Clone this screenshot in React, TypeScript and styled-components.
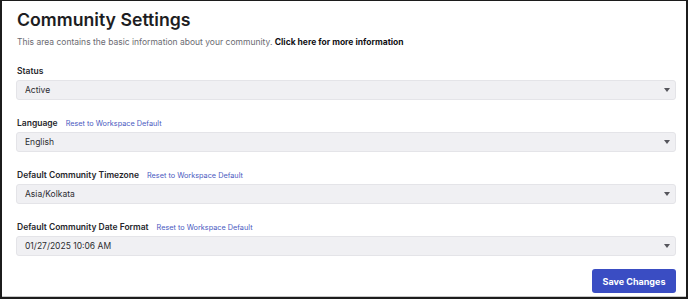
import React from "react";
import styled, { createGlobalStyle } from "styled-components";

const GlobalStyle = createGlobalStyle`
  html, body {
    margin: 0;
    padding: 0;
    background: #ffffff;
  }
  body {
    font-family: Inter, "Noto Sans", "Liberation Sans", sans-serif;
    color: #1f1f24;
  }
`;

const fields = [
  { label: "Status", value: "Active", reset: false },
  { label: "Language", value: "English", reset: true },
  { label: "Default Community Timezone", value: "Asia/Kolkata", reset: true },
  { label: "Default Community Date Format", value: "01/27/2025 10:06 AM", reset: true },
];

const Caret = () => (
  <svg width="6" height="4" viewBox="0 0 6 4">
    <path d="M0 0 L6 0 L3 4 Z" fill="#55555c" />
  </svg>
);

export default function App() {
  return (
    <>
      <GlobalStyle />
      <Frame>
        <Title>Community Settings</Title>
        <Intro>
          This area contains the basic information about your community.{" "}
          <strong>Click here for more information</strong>
        </Intro>
        <Form>
          {fields.map((f) => (
            <Field key={f.label}>
              <LabelRow>
                <Label>{f.label}</Label>
                {f.reset && <ResetLink>Reset to Workspace Default</ResetLink>}
              </LabelRow>
              <Select>
                <span>{f.value}</span>
                <Caret />
              </Select>
            </Field>
          ))}
        </Form>
        <Footer>
          <SaveButton>Save Changes</SaveButton>
        </Footer>
      </Frame>
    </>
  );
}

const Frame = styled.div`
  box-sizing: border-box;
  width: 688px;
  height: 299px;
  border: 2px solid #1c1c1c;
  border-top-width: 1px;
  box-shadow: inset 0 -1px 0 #c8c8c8;
  padding: 8px 10px 0 14px;
  display: flex;
  flex-direction: column;
`;

const Title = styled.h1`
  margin: 0 0 0 1px;
  font-size: 17.7px;
  font-weight: 600;
  line-height: 22px;
  color: #1d1d22;
`;

const Intro = styled.p`
  margin: 5px 0 0 1px;
  font-size: 8.5px;
  line-height: 12px;
  color: #6b6b72;

  strong {
    color: #111114;
    font-weight: 700;
  }
`;

const Form = styled.div`
  margin-top: 17px;
  display: flex;
  flex-direction: column;
  gap: 17px;
`;

const Field = styled.div`
  display: flex;
  flex-direction: column;
  gap: 3px;
`;

const LabelRow = styled.div`
  display: flex;
  align-items: baseline;
  gap: 8px;
  padding-left: 1px;
`;

const Label = styled.span`
  font-size: 8.5px;
  font-weight: 600;
  line-height: 12px;
  color: #26262b;
`;

const ResetLink = styled.a`
  font-size: 7.3px;
  color: #4b5bbf;
  cursor: pointer;
`;

const Select = styled.div`
  box-sizing: border-box;
  height: 20px;
  padding: 0 5px 0 8px;
  display: flex;
  align-items: center;
  justify-content: space-between;
  background: #f0f0f3;
  border: 1px solid #e4e4e8;
  border-radius: 3px;
  font-size: 8.5px;
  color: #2c2c31;
`;

const Footer = styled.div`
  display: flex;
  justify-content: flex-end;
  margin-top: 13px;
`;

const SaveButton = styled.button`
  box-sizing: border-box;
  width: 84px;
  height: 24px;
  border: none;
  border-radius: 3px;
  background: #3a4dc3;
  color: #ffffff;
  font-family: Inter, "Liberation Sans", sans-serif;
  font-size: 9px;
  font-weight: 700;
  cursor: pointer;
`;
